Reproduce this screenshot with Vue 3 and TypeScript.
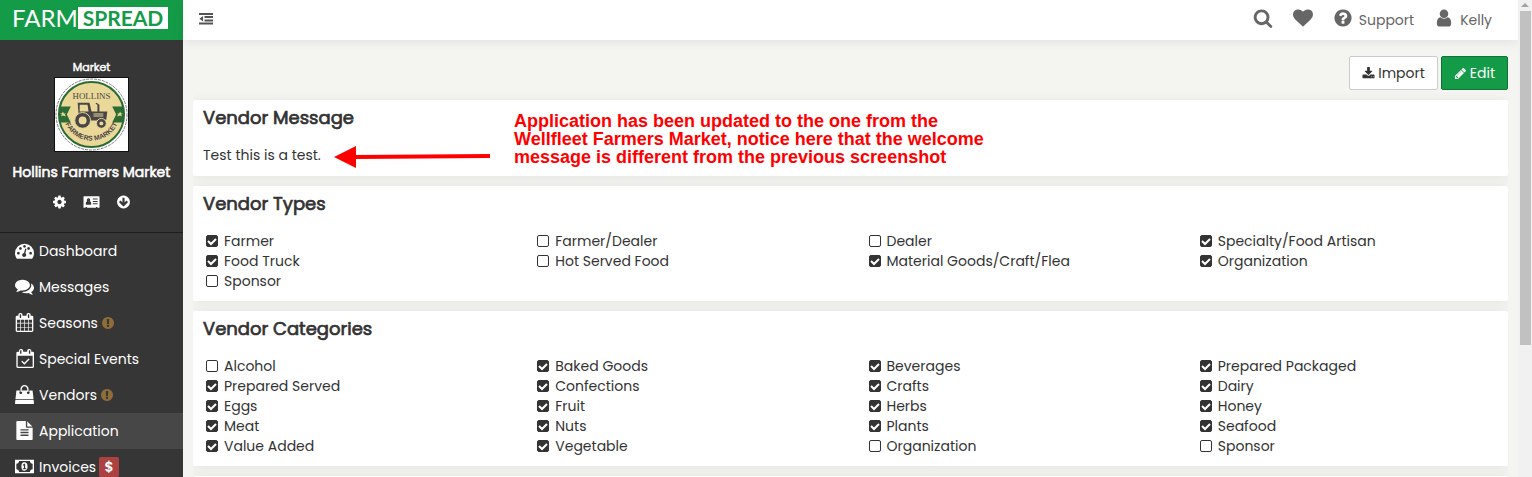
<script setup lang="ts">
import { ref } from 'vue'

interface NavItem {
  label: string
  icon: string
  warn?: boolean
  badge?: string
}
interface Option {
  label: string
  checked: boolean
}
interface Section {
  title: string
  options: Option[]
}

const circle = 'M1664 896q0 209-103 385.5t-279.5 279.5-385.5 103-385.5-103-279.5-279.5-103-385.5 103-385.5 279.5-279.5 385.5-103 385.5 103 279.5 279.5 103 385.5z'

const icons: Record<string, string> = {
  outdent:
    'M0 128h1792v256h-1792zM704 512h1088v256h-1088zM704 960h1088v256h-1088zM0 1344h1792v256h-1792zM520 500v730l-470-365z',
  search:
    'M1216 832q0-185-131.5-316.5t-316.5-131.5-316.5 131.5-131.5 316.5 131.5 316.5 316.5 131.5 316.5-131.5 131.5-316.5zm512 832q0 52-38 90t-90 38q-54 0-90-38l-343-342q-179 124-399 124-143 0-273.5-55.5t-225-150-150-225-55.5-273.5 55.5-273.5 150-225 225-150 273.5-55.5 273.5 55.5 225 150 150 225 55.5 273.5q0 220-124 399l343 343q37 37 37 90z',
  heart:
    'M896 1664q-26 0-44-18l-624-602q-10-8-27.5-26t-55.5-65.5-68-97.5-53.5-121-23.5-138q0-220 127-344t351-124q62 0 126.5 21.5t120 58 95.5 68.5 76 68q36-36 76-68t95.5-68.5 120-58 126.5-21.5q224 0 351 124t127 344q0 221-229 450l-623 600q-18 18-44 18z',
  question:
    'M1024 1376v-192q0-14-9-23t-23-9h-192q-14 0-23 9t-9 23v192q0 14 9 23t23 9h192q14 0 23-9t9-23zm256-672q0-88-55.5-163t-138.5-116-170-41q-243 0-371 213-15 24 8 42l132 100q7 6 19 6 16 0 25-12 53-68 86-92 34-24 86-24 48 0 85.5 26t37.5 59q0 38-20 61t-68 45q-63 28-115.5 86.5t-52.5 125.5v36q0 14 9 23t23 9h192q14 0 23-9t9-23q0-19 21.5-49.5t54.5-49.5q32-18 49-28.5t46-35 44.5-48 28-60.5 12.5-81z' + circle,
  user:
    'M1536 1399q0 109-62.5 187t-150.5 78h-854q-88 0-150.5-78t-62.5-187q0-85 8.5-160.5t31.5-152 58.5-131 94-89 134.5-34.5q131 128 313 128t313-128q76 0 134.5 34.5t94 89 58.5 131 31.5 152 8.5 160.5zm-256-887q0 159-112.5 271.5t-271.5 112.5-271.5-112.5-112.5-271.5 112.5-271.5 271.5-112.5 271.5 112.5 112.5 271.5z',
  download:
    'M1344 1344q0-26-19-45t-45-19-45 19-19 45 19 45 45 19 45-19 19-45zm256 0q0-26-19-45t-45-19-45 19-19 45 19 45 45 19 45-19 19-45zm128-224v320q0 40-28 68t-68 28h-1472q-40 0-68-28t-28-68v-320q0-40 28-68t68-28h465l135 136q58 56 136 56t136-56l136-136h464q40 0 68 28t28 68zm-325-569q17 41-14 70l-448 448q-18 19-45 19t-45-19l-448-448q-31-29-14-70 17-39 59-39h256v-448q0-26 19-45t45-19h256q26 0 45 19t19 45v448h256q42 0 59 39z',
  pencil:
    'M491 1536l91-91-235-235-91 91v107h128v128h107zm523-928q0-22-22-22-10 0-17 7l-542 542q-7 7-7 17 0 22 22 22 10 0 17-7l542-542q7-7 7-17zm-54-192l416 416-832 832h-416v-416zm683 96q0 53-37 90l-166 166-416-416 166-165q36-38 90-38 53 0 91 38l235 234q37 39 37 91z',
  cog:
    'M1152 896q0-106-75-181t-181-75-181 75-75 181 75 181 181 75 181-75 75-181zm512-109v222q0 12-8 23t-20 13l-185 28q-19 54-39 91 35 50 107 138 10 12 10 25t-9 23q-27 37-99 108t-94 71q-12 0-26-9l-138-108q-44 23-91 38-16 136-29 186-7 28-36 28h-222q-14 0-24.5-8.5t-11.5-21.5l-28-184q-49-16-90-37l-141 107q-10 9-25 9-14 0-25-11-126-114-165-168-7-10-7-23 0-12 8-23 15-21 51-66.5t54-70.5q-27-50-41-99l-183-27q-13-2-21-12.5t-8-23.5v-222q0-12 8-23t19-13l186-28q14-46 39-92-40-57-107-138-10-12-10-24 0-10 9-23 26-36 98.5-107.5t94.5-71.5q13 0 26 10l138 107q44-23 91-38 16-136 29-186 7-28 36-28h222q14 0 24.5 8.5t11.5 21.5l28 184q49 16 90 37l142-107q9-9 24-9 13 0 25 10 129 119 165 170 7 8 7 22 0 12-8 23-15 21-51 66.5t-54 70.5q26 50 41 98l183 28q13 2 21 12.5t8 23.5z',
  card:
    'M60 256h1672q60 0 60 60v1160q0 60-60 60h-182v-90h-150v90h-1008v-90h-150v90h-182q-60 0-60-60v-1160q0-60 60-60zM560 480a190 200 0 1 0 1 0zM250 1130q0 60 60 60h500q60 0 60-60 0-290-150-310-160 130-320 0-150 20-150 310zM1040 512v110h540v-110zM1040 780v110h540v-110zM1040 1048v110h540v-110z',
  down:
    'M1412 897q0-27-18-45l-91-91q-18-18-45-18t-45 18l-189 189v-502q0-26-19-45t-45-19h-128q-26 0-45 19t-19 45v502l-189-189q-19-19-45-19t-45 19l-91 91q-18 18-18 45t18 45l362 362 91 91q18 18 45 18t45-18l91-91 362-362q18-18 18-45z' + circle,
  exclamation:
    'M896 128q209 0 385.5 103t279.5 279.5 103 385.5-103 385.5-279.5 279.5-385.5 103-385.5-103-279.5-279.5-103-385.5 103-385.5 279.5-279.5 385.5-103zm128 1247v-190q0-14-9-23.5t-22-9.5h-192q-13 0-23 10t-10 23v190q0 13 10 23t23 10h192q13 0 22-9.5t9-23.5zm-2-344l18-621q0-12-10-18-10-8-24-8h-220q-14 0-24 8-10 6-10 18l17 621q0 10 10 17.5t24 7.5h185q14 0 23.5-7.5t10.5-17.5z',
  gauge:
    'M896 256a896 896 0 0 1 896 896q0 260-141 483-19 29-54 29h-1402q-35 0-54-29-141-222-141-483a896 896 0 0 1 896-896zM320 1024a128 128 0 1 0 1 0zM512 576a128 128 0 1 0 1 0zM896 384a128 128 0 1 0 1 0zM1280 576a128 128 0 1 0 1 0zM1472 1024a128 128 0 1 0 1 0zM952 748l-101 382a192 192 0 1 0 124 32l101-382q0-50-46-70-60-10-78 38z',
  comments:
    'M1408 768q0 139-94 257t-256.5 186.5-353.5 68.5q-86 0-176-16-124 88-278 128-36 9-86 16h-3q-11 0-20.5-8t-11.5-21q-1-3-1-6.5t.5-6.5 2-6l2.5-5 3.5-5.5 4-5 4.5-5 4-4.5q5-6 23-25t26-29.5 22.5-29 25-38.5 20.5-44q-124-72-195-177t-71-224q0-139 94-257t256.5-186.5 353.5-68.5 353.5 68.5 256.5 186.5 94 257zm384 256q0 120-71 224.5t-195 176.5q10 24 20.5 44t25 38.5 22.5 29 26 29.5 23 25q1 1 4 4.5t4.5 5 4 5 3.5 5.5l2.5 5 2 6 .5 6.5-1 6.5q-3 14-13 22t-22 7q-50-7-86-16-154-40-278-128-90 16-176 16-271 0-472-132 58 4 88 4 161 0 309-45t264-129q125-92 192-212t67-254q0-77-23-152 129 71 204 178t75 230z',
  calendar:
    'M192 1664h288v-288h-288v288zm352 0h320v-288h-320v288zm-352-352h288v-320h-288v320zm352 0h320v-320h-320v320zm-352-384h288v-288h-288v288zm736 736h320v-288h-320v288zm-384-736h320v-288h-320v288zm768 736h288v-288h-288v288zm-384-352h320v-320h-320v320zm-352-864v-288q0-13-9.5-22.5t-22.5-9.5h-64q-13 0-22.5 9.5t-9.5 22.5v288q0 13 9.5 22.5t22.5 9.5h64q13 0 22.5-9.5t9.5-22.5zm736 864h288v-320h-288v320zm-384-384h320v-288h-320v288zm384 0h288v-288h-288v288zm32-480v-288q0-13-9.5-22.5t-22.5-9.5h-64q-13 0-22.5 9.5t-9.5 22.5v288q0 13 9.5 22.5t22.5 9.5h64q13 0 22.5-9.5t9.5-22.5zm384-64v1280q0 52-38 90t-90 38h-1408q-52 0-90-38t-38-90v-1280q0-52 38-90t90-38h128v-96q0-66 47-113t113-47h64q66 0 113 47t47 113v96h384v-96q0-66 47-113t113-47h64q66 0 113 47t47 113v96h128q52 0 90 38t38 90z',
  calendarCheck:
    'M1664 256q52 0 90 38t38 90v1280q0 52-38 90t-90 38h-1408q-52 0-90-38t-38-90v-1280q0-52 38-90t90-38h128v-96q0-66 47-113t113-47h64q66 0 113 47t47 113v96h384v-96q0-66 47-113t113-47h64q66 0 113 47t47 113v96zM1312 160v288h128v-320h-96zM480 160v288h128v-320h-96zM256 640v1024h1408v-1024zM880 1480l-290-290 90-90 200 200 400-400 90 90z',
  bag:
    'M1757 1408l35 313q3 28-16 50-19 21-48 21h-1664q-29 0-48-21-19-22-16-50l35-313zM1664 571l86 773h-1708l86-773q3-24 21-41t43-17h256v128a128 128 0 1 0 192 0v-128h512v128a128 128 0 1 0 192 0v-128h256q25 0 43 17t21 41zM1280 384v256h-128v-256q0-106-75-181t-181-75-181 75-75 181v256h-128v-256q0-159 112-272t272-112 272 112 112 272z',
  file:
    'M1596 476q14 14 28 36h-472v-472q22 14 36 28zm-476 164h544v1056q0 40-28 68t-68 28h-1344q-40 0-68-28t-28-68v-1600q0-40 28-68t68-28h800v544q0 40 28 68t68 28zm160 736v-64q0-14-9-23t-23-9h-704q-14 0-23 9t-9 23v64q0 14 9 23t23 9h704q14 0 23-9t9-23zm0-256v-64q0-14-9-23t-23-9h-704q-14 0-23 9t-9 23v64q0 14 9 23t23 9h704q14 0 23-9t9-23zm0-256v-64q0-14-9-23t-23-9h-704q-14 0-23 9t-9 23v64q0 14 9 23t23 9h704q14 0 23-9t9-23z',
  money:
    'M0 256h1792v1280h-1792zM384 384q0 106-75 181t-181 75v512q106 0 181 75t75 181h1024q0-106 75-181t181-75v-512q-106 0-181-75t-75-181zM896 500q290 20 290 396t-290 396-290-396 290-396zM740 1050v100h320v-100h-104v-410h-100l-130 120 66 74 50-44v260z',
}

const navItems: NavItem[] = [
  { label: 'Dashboard', icon: 'gauge' },
  { label: 'Messages', icon: 'comments' },
  { label: 'Seasons', icon: 'calendar', warn: true },
  { label: 'Special Events', icon: 'calendarCheck' },
  { label: 'Vendors', icon: 'bag', warn: true },
  { label: 'Application', icon: 'file' },
  { label: 'Invoices', icon: 'money', badge: '$' },
]
const active = ref('Application')

const quickLinks = [
  { label: 'Settings', icon: 'cog' },
  { label: 'Profile', icon: 'card' },
  { label: 'Downloads', icon: 'down' },
]

// A leading "-" marks an option that is not enabled.
const parse = (names: string[]): Option[] =>
  names.map((n) => ({ label: n.replace(/^-/, ''), checked: !n.startsWith('-') }))

const sections = ref<Section[]>([
  {
    title: 'Vendor Types',
    options: parse([
      'Farmer', '-Farmer/Dealer', '-Dealer', 'Specialty/Food Artisan',
      'Food Truck', '-Hot Served Food', 'Material Goods/Craft/Flea', 'Organization',
      '-Sponsor',
    ]),
  },
  {
    title: 'Vendor Categories',
    options: parse([
      '-Alcohol', 'Baked Goods', 'Beverages', 'Prepared Packaged',
      'Prepared Served', 'Confections', 'Crafts', 'Dairy',
      'Eggs', 'Fruit', 'Herbs', 'Honey',
      'Meat', 'Nuts', 'Plants', 'Seafood',
      'Value Added', 'Vegetable', '-Organization', '-Sponsor',
    ]),
  },
])
</script>

<template>
  <div class="app">
    <aside class="sidebar">
      <a class="brand" href="#" aria-label="FarmSpread">
        <span class="brand-farm">FARM</span><span class="brand-spread">SPREAD</span>
      </a>
      <section class="market">
        <p class="kind">Market</p>
        <svg class="crest" viewBox="0 0 74 74" role="img" aria-label="Hollins Farmers Market crest">
          <defs>
            <path id="crest-arc" d="M9 42A29 29 0 0 0 65 42" />
          </defs>
          <rect width="74" height="74" fill="#fff" />
          <circle cx="37" cy="37" r="36" fill="#fff" stroke="#777" stroke-width="1" stroke-dasharray="3 1" />
          <circle cx="37" cy="37" r="33" fill="#ead898" stroke="#2b6b34" stroke-width="2" />
          <path d="M4 29h12l-4 8 4 8H4zM70 29H58l4 8-4 8h12z" fill="#2b6b34" />
          <path d="M8 34l1 2h2l-1 1 1 2-3-1-2 1 1-2-2-1h2zM66 34l1 2h2l-2 1 1 2-2-1-3 1 1-2-1-1h2z" fill="#ead898" />
          <text x="37" y="21" text-anchor="middle" class="crest-top">HOLLINS</text>
          <text class="crest-bottom"><textPath href="#crest-arc" startOffset="50%" text-anchor="middle">FARMERS MARKET</textPath></text>
          <g fill="#494547">
            <path fill-rule="evenodd" d="M23 25h12l2 9h6v-7l-2-1 1-1 3 2v7h8l-1 8-4 1H36l-2-4-10-1zM25 27v7h9l-1-7z" />
            <circle cx="28" cy="43" r="8" stroke="#ead898" />
            <circle cx="47" cy="46" r="5" stroke="#ead898" />
          </g>
          <path d="M39 36h10v1H39zM39 38h10v1H39z" fill="#ead898" />
          <circle cx="28" cy="43" r="4" fill="#ead898" />
          <circle cx="47" cy="46" r="2" fill="#ead898" />
        </svg>
        <h1 class="market-name">Hollins Farmers Market</h1>
        <div class="quick">
          <a v-for="q in quickLinks" :key="q.icon" href="#" :aria-label="q.label">
            <svg viewBox="0 0 1792 1792" :class="['quick-icon', { wide: q.icon === 'card' }]" aria-hidden="true"><path :d="icons[q.icon]" fill-rule="evenodd" /></svg>
          </a>
        </div>
      </section>
      <nav class="nav" aria-label="Main">
        <a
          v-for="item in navItems"
          :key="item.label"
          href="#"
          :class="['nav-item', { active: item.label === active }]"
          @click.prevent="active = item.label"
        >
          <svg viewBox="0 0 1792 1792" class="nav-icon" aria-hidden="true"><path :d="icons[item.icon]" fill-rule="evenodd" /></svg>
          <span>{{ item.label }}</span>
          <svg v-if="item.warn" viewBox="128 128 1536 1536" class="warn" aria-hidden="true"><path :d="icons.exclamation" fill-rule="evenodd" /></svg>
          <span v-if="item.badge" class="badge">{{ item.badge }}</span>
        </a>
      </nav>
    </aside>

    <div class="main">
      <header class="topbar">
        <button type="button" class="toggle" aria-label="Toggle menu">
          <svg viewBox="0 0 1792 1792" aria-hidden="true"><path :d="icons.outdent" /></svg>
        </button>
        <div class="top-links">
          <a href="#" aria-label="Search"><svg viewBox="0 0 1792 1792" aria-hidden="true"><path :d="icons.search" fill-rule="evenodd" /></svg></a>
          <a href="#" aria-label="Favorites"><svg viewBox="0 0 1792 1792" aria-hidden="true"><path :d="icons.heart" /></svg></a>
          <a href="#"><svg viewBox="0 0 1792 1792" aria-hidden="true"><path :d="icons.question" fill-rule="evenodd" /></svg>Support</a>
          <a href="#"><svg viewBox="0 0 1792 1792" aria-hidden="true"><path :d="icons.user" /></svg>Kelly</a>
        </div>
      </header>

      <main class="content">
        <div class="actions">
          <button type="button" class="btn">
            <svg viewBox="0 0 1792 1792" aria-hidden="true"><path :d="icons.download" fill-rule="evenodd" /></svg>Import
          </button>
          <button type="button" class="btn primary">
            <svg viewBox="0 0 1792 1792" aria-hidden="true"><path :d="icons.pencil" fill-rule="evenodd" /></svg>Edit
          </button>
        </div>

        <div class="cards">
          <section class="card">
            <h2>Vendor Message</h2>
            <p class="message">Test this is a test.</p>
            <div class="note">
              <svg class="arrow" viewBox="0 0 156 22" aria-hidden="true">
                <path d="M0 11L22 0v9L156 8v4L22 13v9z" fill="#f00" />
              </svg>
              <p>
                Application has been updated to the one from the<br />
                Wellfleet Farmers Market, notice here that the welcome<br />
                message is different from the previous screenshot
              </p>
            </div>
          </section>
          <section v-for="s in sections" :key="s.title" class="card">
            <h2>{{ s.title }}</h2>
            <div class="options">
              <label v-for="o in s.options" :key="o.label" class="option">
                <input v-model="o.checked" type="checkbox" />{{ o.label }}
              </label>
            </div>
          </section>
          <section class="card"></section>
        </div>
      </main>
    </div>

    <div class="scrollbar" aria-hidden="true">
      <span class="scroll-up"></span>
      <span class="scroll-thumb"></span>
    </div>
  </div>
</template>

<style>
body {
  margin: 0;
  background: #f4f5f0;
}
</style>

<style scoped>
.app {
  display: flex;
  height: 100vh;
  overflow: hidden;
  background: #f4f5f0;
  color: #333;
  font: 14px/20px Poppins, Inter, sans-serif;
}
.app * {
  box-sizing: border-box;
}
a {
  color: inherit;
  text-decoration: none;
}
p,
h1,
h2 {
  margin: 0;
}
svg {
  fill: currentColor;
  flex: none;
}
.sidebar {
  flex: 0 0 183px;
  min-width: 0;
  background: #363636;
  color: #fff;
}
.brand {
  display: flex;
  align-items: center;
  height: 40px;
  padding: 0 15px 4px 12px;
  background: #149b48;
  font-family: Lato, sans-serif;
}
.brand-farm {
  flex: 1 1 0;
  min-width: 0;
  font-size: 24px;
}
.brand-spread {
  flex: 0 0 90px;
  height: 22px;
  background: #fff;
  color: #149b48;
  font-size: 21px;
  line-height: 22px;
  font-weight: 700;
  text-align: center;
}
.market {
  display: flex;
  flex-direction: column;
  align-items: center;
  height: 193px;
  padding: 17px 0 0;
  border-bottom: 1px solid #1f1f1f;
}
.kind,
.market-name,
h2 {
  font-weight: 400;
  -webkit-text-stroke: 0.04em currentColor;
}
.kind {
  font-size: 11px;
}
.crest {
  width: 75px;
  height: 75px;
  border: 1px solid #111;
}
.crest-top {
  font: 9px 'Liberation Serif', serif;
  fill: #494547;
}
.crest-bottom {
  font: 700 7px 'Liberation Sans', sans-serif;
  fill: #494547;
}
.market-name {
  margin-top: 10px;
  font-size: 14px;
  line-height: 20px;
  white-space: nowrap;
}
.quick {
  display: flex;
  align-items: center;
  gap: 16px;
  margin-top: 12px;
}
.quick a {
  display: flex;
}
.quick-icon {
  width: 15px;
  height: 16px;
}
.quick-icon.wide {
  width: 17px;
}
.nav-item {
  display: flex;
  align-items: center;
  height: 36px;
  padding-left: 15px;
}
.nav-item.active {
  background: #474747;
}
.nav-icon {
  width: 19px;
  height: 19px;
  margin: 0 5px 2px 0;
}
.warn {
  width: 12px;
  height: 12px;
  margin-left: 4px;
  color: #8f6d38;
}
.badge {
  width: 20px;
  margin-left: 3px;
  border-radius: 2px;
  background: #ac4142;
  font-weight: 600;
  text-align: center;
}
.main {
  flex: 1;
  min-width: 0;
}
.topbar {
  display: flex;
  align-items: center;
  justify-content: space-between;
  height: 40px;
  padding: 0 26px 0 16px;
  background: #fff;
  box-shadow: 0 2px 10px rgba(0, 0, 0, 0.08);
  color: #666;
}
.toggle {
  display: flex;
  padding: 0 0 2px;
  border: 0;
  background: none;
  color: #555;
}
.toggle svg {
  width: 14px;
  height: 14px;
}
.top-links {
  display: flex;
  gap: 20px;
}
.top-links a {
  display: flex;
  align-items: center;
  gap: 6px;
}
.top-links svg {
  width: 20px;
  height: 20px;
  margin-bottom: 4px;
}
.content {
  padding: 16px 10px 0;
}
.actions {
  display: flex;
  justify-content: flex-end;
  gap: 3px;
}
.btn {
  display: flex;
  align-items: center;
  gap: 3px;
  height: 34px;
  padding: 0 12px;
  border: 1px solid #ccc;
  border-radius: 2px;
  background: #fff;
  color: #333;
  font: inherit;
}
.btn svg {
  width: 13px;
  height: 13px;
}
.btn.primary {
  border-color: #0f7536;
  background: #149b48;
  color: #fff;
}
.cards {
  display: flex;
  flex-direction: column;
  gap: 10px;
  padding-top: 10px;
  overflow: hidden;
}
.card {
  position: relative;
  min-height: 40px;
  padding: 5px 10px 10px;
  border-radius: 2px;
  background: #fff;
  box-shadow: 0 1px 12px rgba(0, 0, 0, 0.07);
}
h2 {
  margin-bottom: 15px;
  font-size: 18px;
  line-height: 25px;
}
.message {
  padding-bottom: 1px;
}
.note {
  position: absolute;
  top: 12px;
  left: 141px;
  display: flex;
  align-items: flex-end;
  gap: 24px;
  color: #f00;
  font: 700 18px/18px 'Liberation Sans', sans-serif;
}
.arrow {
  width: 156px;
  height: 22px;
  margin-bottom: -2px;
}
.options {
  display: grid;
  grid-template-columns: repeat(4, 1fr);
  margin: 0 -15px;
}
.option {
  display: flex;
  align-items: center;
  gap: 6px;
  padding-left: 18px;
}
.option input {
  appearance: none;
  width: 12px;
  height: 12px;
  margin: 0;
  border: 1px solid #333;
  border-radius: 2px;
}
.option input:checked {
  background: #333 url("data:image/svg+xml,%3Csvg xmlns='http://www.w3.org/2000/svg' viewBox='0 0 10 10'%3E%3Cpath d='M1 5l3 3 5-5' fill='none' stroke='white' stroke-width='2'/%3E%3C/svg%3E") center / 10px 10px;
}
.scrollbar {
  display: flex;
  flex: 0 0 14px;
  flex-direction: column;
  align-items: center;
  background: #f1f1f1;
}
.scroll-up {
  margin: 3px 0 4px;
  border: 4px solid transparent;
  border-top-width: 0;
  border-bottom: 4px solid #a3a3a3;
}
.scroll-thumb {
  width: 11px;
  height: 70%;
  background: #c1c1c1;
}
</style>
